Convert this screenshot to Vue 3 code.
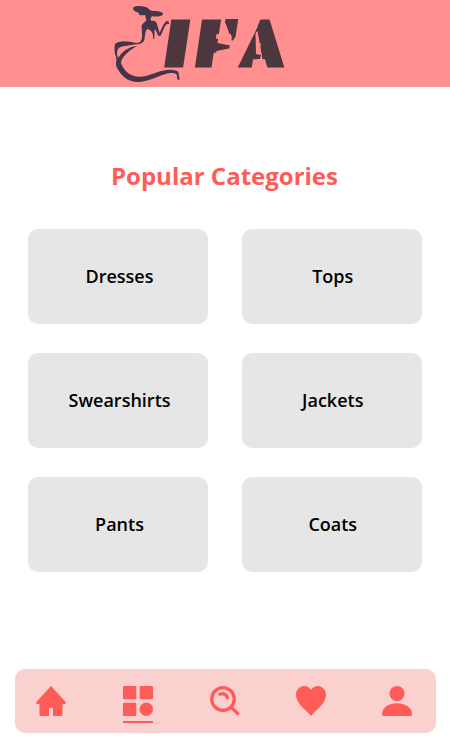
<script setup>
const categories = ['Dresses', 'Tops', 'Swearshirts', 'Jackets', 'Pants', 'Coats']
</script>

<template>
  <div class="screen">
    <header class="header">
      <svg class="logo" viewBox="105 0 190 87" role="img" aria-label="IFA">
        <g class="figure">
          <path d="M133 8C135 5 144 6 148 8C149 10 151 11 154 11C159 11 163 12 163 14C162 17 154 17 152 16C151 18 149 20 146 19L145 15C139 16 138 14 139 13C135 12 133 10 133 8Z" />
          <path d="M146.5 18H150.5L151 21C154 20.5 156 21 157 24L159.5 33L163.5 24.5L166 21.2L168.5 21L169 24L167 24L165 26L160.5 36H158.5L155 29C153.5 31 155.5 34 154 39H153C153.5 34 152 30 147 29C144.5 32 145.5 37 144 41C141 45 135 44 131 45C126 46 120 46 118 49C116.5 52 117 55 118 58C123 51 128 47 137 46C128 51 121 58 121 63C125 73 133 79 146 76C157 73 166 67.5 177 71C180 72 178 77 180 79L178 80C176 77 179 74 173 73C164 72 153 81 138 82C127 82 121 75 117 68C115 64 117 62 116 57C114.5 53 114 49 115 44C119 40 128 41 136 43C143 43 142 37 142 32L141.5 26C143 22 147 22 146.5 18Z" />
        </g>
        <g class="letters">
          <text transform="translate(164.3 64.5) skewX(-8.5) scale(1.14 1)">I</text>
          <text transform="translate(195 64.5) skewX(-8.5)">F</text>
        </g>
        <g class="cuts">
          <path d="M221.8 15H225.2V22L232 41L235.3 37L238.3 15H250V72H213.8L216.5 51L229 48.5L230 45.5L217.5 43Z" />
        </g>
        <path class="serif" d="M225.3 23V21L226.5 19H238.3L235.5 37L232.5 41Q231 31 225.3 23Z" />
        <g class="letters">
          <text transform="translate(239.2 64.5) scale(.92 1)">A</text>
        </g>
        <g class="cuts">
          <path d="M255.5 33L257.5 31L264.3 69H251.5L253 59.5L260 59L261 55L256 54Z" />
          <path d="M237 69L256.8 28.5L262 15H252L236 48Z" />
        </g>
      </svg>
    </header>

    <main class="content">
      <h1 class="title">Popular Categories</h1>
      <div class="categories">
        <button v-for="name in categories" :key="name" class="category">{{ name }}</button>
      </div>
    </main>

    <nav class="nav">
      <a class="item" aria-label="Home">
        <svg class="icon" viewBox="0 0 30 30"><path d="M15 0L29.7 16Q30.5 18 28.5 18H26.5V28.5Q26.5 30 25 30H17V22H13V30H5Q3.5 30 3.5 28.5V18H1.5Q-.5 18 .3 16Z" /></svg>
      </a>
      <a class="item active" aria-label="Categories">
        <svg class="icon" viewBox="0 0 30 30">
          <rect width="13.3" height="13.3" rx="1" /><rect x="16.7" width="13.3" height="13.3" rx="1" />
          <rect y="16.7" width="13.3" height="13.3" rx="1" /><circle cx="23.3" cy="23.3" r="6.7" />
        </svg>
      </a>
      <a class="item" aria-label="Search">
        <svg class="icon line" viewBox="0 0 30 30"><circle cx="13" cy="13" r="11.3" /><path d="M21 21L28.7 28.7M8.8 9.2C12 6.2 17.5 8 17.5 13" /></svg>
      </a>
      <a class="item" aria-label="Favourites">
        <svg class="icon" viewBox="0 0 30 30"><path d="M15 30C12 25.5 0 18 0 9C0-.5 11-3 15 4C19-3 30-.5 30 9C30 18 18 25.5 15 30Z" /></svg>
      </a>
      <a class="item" aria-label="Profile">
        <svg class="icon" viewBox="0 0 30 30"><circle cx="15" cy="7.6" r="7.6" /><path d="M1.5 30Q0 30 0 28C0 21.5 7 17.3 15 17.3S30 21.5 30 28Q30 30 28.5 30Z" /></svg>
      </a>
    </nav>
  </div>
</template>

<style>
body {
  background: #fff;
}
</style>

<style scoped>
.screen {
  box-sizing: border-box;
  display: flex;
  flex-direction: column;
  width: 450px;
  height: 750px;
  padding-bottom: 17px;
  font-family: "Open Sans", sans-serif;
}

.header {
  height: 87px;
  flex: none;
  padding-left: 105px;
  background: #ff908f;
}

.logo {
  display: block;
  width: 190px;
  height: 87px;
  overflow: visible;
}

.figure {
  fill: #43364a;
}

.letters {
  fill: #4b373d;
  stroke: #4b373d;
  stroke-width: 5px;
  stroke-linejoin: miter;
  font-family: Inter, sans-serif;
  font-size: 59px;
  font-weight: 900;
}

.serif {
  fill: #4b373d;
}

.cuts {
  fill: #ff908f;
}

.content {
  flex: 1;
  padding: 72px 28px 0;
}

.title {
  margin: 0 1px 36px 0;
  color: #ff5c58;
  font-size: 24px;
  font-weight: 700;
  line-height: 34px;
  text-align: center;
}

.categories {
  display: grid;
  grid-template-columns: 180px 180px;
  gap: 29px 34px;
}

.category {
  height: 95px;
  padding: 0 0 2px 1.5px;
  border: 0;
  border-radius: 10px;
  background: #e6e6e6;
  color: #000;
  font: 600 18px "Open Sans", sans-serif;
}

.category:nth-child(odd) {
  padding-left: 3px;
}

.nav {
  box-sizing: border-box;
  display: grid;
  grid-template-columns: 87px 87px 86px 86px 30px;
  width: 421px;
  height: 64px;
  margin-left: 15px;
  padding: 17px 24px 0 21px;
  border-radius: 10px;
  background: #fbd1cf;
}

.item {
  width: 30px;
}

.icon {
  display: block;
  width: 30px;
  height: 30px;
  fill: #ff5c58;
}

.line {
  fill: none;
  stroke: #ff5c58;
  stroke-width: 3.3px;
}

.active::after {
  content: "";
  display: block;
  height: 2px;
  margin-top: 5px;
  background: #ff5c58;
}
</style>
